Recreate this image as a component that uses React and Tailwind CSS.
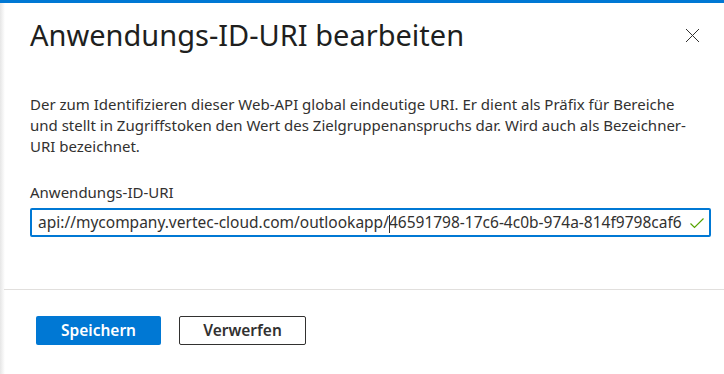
export default function App() {
  const font = { fontFamily: '"Segoe UI", "Noto Sans", "Open Sans", sans-serif' };
  return (
    <div className="w-[724px] h-[374px] bg-white overflow-hidden flex flex-col text-[#323130]" style={font}>
      <div className="h-[3px] bg-[#0078d4] shrink-0" />
      <div className="flex flex-1">
        <div className="w-[5px] shrink-0 bg-gradient-to-r from-[#e6e6e6] to-white" />
        <div className="flex-1 flex flex-col">
          <div className="flex items-start justify-between pl-[25px] pr-[24px] pt-[13px]">
            <h1 className="text-[29px] leading-[38px] font-normal text-[#201f1e]">Anwendungs-ID-URI bearbeiten</h1>
            <button className="mt-[11px] w-[16px] h-[16px] flex items-center justify-center">
              <svg width="15" height="15" viewBox="0 0 15 15" fill="none" stroke="#323130" strokeWidth="1">
                <path d="M1 1 L14 14 M14 1 L1 14" />
              </svg>
            </button>
          </div>
          <div className="pl-[25px] pr-[30px] pt-[40px]">
            <p className="text-[15px] leading-[21px] text-[#323130]">
              Der zum Identifizieren dieser Web-API global eindeutige URI. Er dient als Präfix für Bereiche und stellt in Zugriffstoken den Wert des Zielgruppenanspruchs dar. Wird auch als Bezeichner-URI bezeichnet.
            </p>
            <div className="mt-[25px] text-[15px] leading-[20px]">Anwendungs-ID-URI</div>
            <div className="mt-[6px] mr-[-17px] h-[29px] border-2 border-[#0078d4] rounded-[2px] flex items-center pl-[6px] pr-[4px]">
              <span className="flex-1 text-[15.5px] text-[#323130] whitespace-nowrap overflow-hidden">
                api://mycompany.vertec-cloud.com/outlookapp/<span className="inline-block w-px h-[18px] bg-[#323130] align-middle -mr-px" />46591798-17c6-4c0b-974a-814f9798caf6
              </span>
              <svg width="16" height="16" viewBox="0 0 16 16" fill="none" stroke="#57a300" strokeWidth="1.2">
                <path d="M1.5 8.5 L5.5 12.5 L14.5 3.5" />
              </svg>
            </div>
          </div>
          <div className="mt-[52px] h-px bg-[#e1dfdd] -ml-px" />
          <div className="flex gap-[18px] pl-[31px] pt-[26px]">
            <button className="w-[125px] h-[29px] bg-[#0078d4] rounded-[2px] text-white text-[15.5px] font-semibold">Speichern</button>
            <button className="w-[127px] h-[29px] border border-[#323130] rounded-[2px] text-[#323130] text-[15.5px] font-semibold bg-white">Verwerfen</button>
          </div>
        </div>
      </div>
    </div>
  );
}
